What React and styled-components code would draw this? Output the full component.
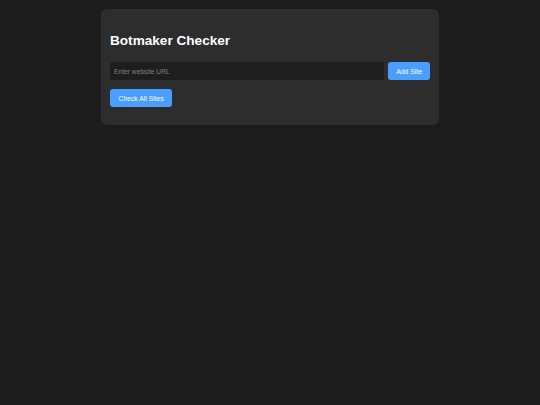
import React, { useState } from "react";
import styled, { createGlobalStyle } from "styled-components";

const GlobalStyle = createGlobalStyle`
  html, body {
    margin: 0;
    padding: 0;
    background-color: #1c1c1c;
    font-family: "Liberation Sans", Arial, sans-serif;
  }
`;

const Page = styled.div`
  min-height: 405px;
  padding-top: 9px;
  box-sizing: border-box;
`;

const Card = styled.div`
  width: 338px;
  margin: 0 auto;
  box-sizing: border-box;
  padding: 9px 9px 18px;
  background-color: #2d2d2d;
  border-radius: 6px;
`;

const Title = styled.h1`
  margin: 15px 0 14px;
  font-size: 13.6px;
  font-weight: 700;
  color: #ffffff;
`;

const Row = styled.div`
  display: flex;
  gap: 4px;
  margin-bottom: ${({ $last }) => ($last ? "0" : "9px")};
`;

const UrlInput = styled.input`
  flex: 1;
  height: 18px;
  box-sizing: border-box;
  padding: 0 4px;
  border: none;
  border-radius: 3px;
  background-color: #1e1e1e;
  color: #e0e0e0;
  font-family: inherit;
  font-size: 6.7px;
  outline: none;

  &::placeholder {
    color: #808080;
  }
`;

const Button = styled.button`
  height: 18px;
  box-sizing: border-box;
  padding: 0 ${({ $wide }) => ($wide ? "8.5px" : "8px")};
  border: none;
  border-radius: 3px;
  background-color: #4a9eff;
  color: #ffffff;
  font-family: inherit;
  font-size: 6.8px;
  cursor: pointer;
`;

const App = () => {
  const [url, setUrl] = useState("");

  return (
    <>
      <GlobalStyle />
      <Page>
        <Card>
          <Title>Botmaker Checker</Title>
          <Row>
            <UrlInput
              placeholder="Enter website URL"
              value={url}
              onChange={(e) => setUrl(e.target.value)}
            />
            <Button>Add Site</Button>
          </Row>
          <Row $last>
            <Button $wide>Check All Sites</Button>
          </Row>
        </Card>
      </Page>
    </>
  );
};

export default App;
